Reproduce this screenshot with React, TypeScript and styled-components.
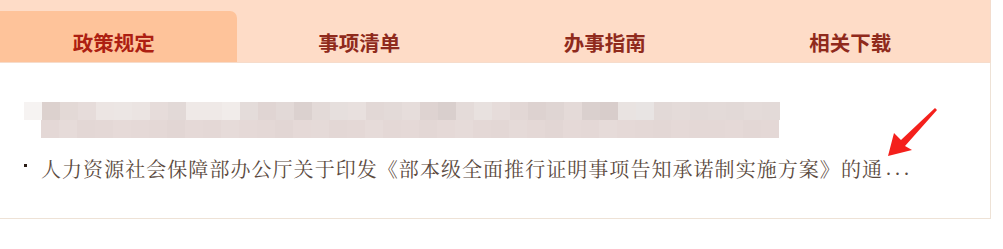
import React from "react";
import styled, { createGlobalStyle } from "styled-components";

const Global = createGlobalStyle`
  html, body { margin: 0; padding: 0; background: #fff; overflow: hidden; }
  body { font-family: "Noto Sans CJK SC", "Noto Sans", sans-serif; }
`;

const Page = styled.div`
  position: relative;
  width: 1000px;
  margin-left: -9px;
`;

const TabBar = styled.div`
  display: flex;
  align-items: flex-end;
  height: 62px;
  background: #fedcc7;
  border-right: 1px solid #f3dccd;
  box-sizing: border-box;
`;

const Tab = styled.div<{ $active?: boolean }>`
  width: 245.5px;
  height: 51px;
  box-sizing: border-box;
  padding-top: 21px;
  text-align: center;
  font-family: "Noto Sans CJK SC", sans-serif;
  font-weight: 700;
  font-size: 20.5px;
  line-height: 21px;
  color: ${(p) => (p.$active ? "#ad1f12" : "#8f2a1c")};
  background: ${(p) => (p.$active ? "#fec39a" : "transparent")};
  border-top-right-radius: ${(p) => (p.$active ? "7px" : "0")};
`;

const Panel = styled.div`
  height: 157px;
  box-sizing: border-box;
  border: 1px solid #eee2d6;
  border-top: 1px solid #f6dccb;
  padding: 39px 0 0 32px;
`;

const Mosaic = styled.div`
  display: flex;
  flex-direction: column;
`;

const MosaicRow = styled.div<{ $indent: number }>`
  display: flex;
  height: 18px;
  margin-left: ${(p) => p.$indent}px;
`;

const Cell = styled.div`
  width: 18px;
  height: 18px;
`;

const Item = styled.div`
  display: flex;
  align-items: center;
  margin-top: 19px;
  height: 22px;
`;

const Bullet = styled.span`
  width: 3px;
  height: 3px;
  background: #2b1d16;
  margin: -5px 14px 0 0;
  flex: none;
`;

const Title = styled.span`
  font-family: "Noto Serif CJK SC", "Noto Sans CJK SC", serif;
  font-weight: 400;
  font-size: 20px;
  letter-spacing: 1.05px;
  color: #5b4a40;
  white-space: nowrap;
`;

const Dots = styled.span`
  font-family: "Liberation Serif", serif;
  font-size: 20px;
  letter-spacing: 4px;
  color: #5b4a40;
  margin-left: 3px;
`;

const Arrow = styled.svg`
  position: absolute;
  left: 0;
  top: 0;
  pointer-events: none;
`;

const row1 = [
  "#f6f3f2", "#dcd1ce", "#e3d9d6", "#e6dcda", "#ece5e3", "#ece6e4", "#ebe4e2",
  "#e6dcda", "#e2d9d7", "#efe9e7", "#efe9e7", "#f1ecea", "#e4dcda", "#e0d5d3",
  "#e2d9d7", "#dbd1cf", "#e3dad8", "#e6dfdd", "#e8e0de", "#e2d8d6", "#e3dad8",
  "#e6dddb", "#ded3d1", "#d9cfcd", "#e4dbd9", "#e8e1df", "#e6dcda", "#e2d7d5",
  "#ddd2d0", "#dfd5d3", "#e4dad8", "#dad0ce", "#d8cdcb", "#e9e3e1", "#e8e4e3",
  "#e2d9d7", "#e4dbd9", "#e2d9d7", "#e3dad8", "#e2d9d7", "#e4dbd9", "#e3dad8",
];
const row2 = [
  "#e4d8d6", "#e6dbd9", "#e3d7d5", "#e4d8d6", "#e6dad8", "#e5d9d7", "#e4d8d6",
  "#e2d6d4", "#e5d9d7", "#e4d8d6", "#e6dbd9", "#e5d9d7", "#e4d8d6", "#e2d6d4",
  "#e5d9d7", "#e5dad8", "#e3d7d5", "#e4d8d6", "#e6dbd9", "#e4d8d6", "#e5d9d7",
  "#e3d7d5", "#e5d9d7", "#e6dbd9", "#e4d8d6", "#e3d7d5", "#e5dad8", "#e4d8d6",
  "#e2d6d4", "#e5d9d7", "#e4d8d6", "#e6dbd9", "#e5d9d7", "#e4d8d6", "#e3d7d5",
  "#e5d9d7", "#e4d8d6", "#e4d8d6", "#e5d9d7", "#e3d7d5", "#e4d8d6",
];

const tabs = ["政策规定", "事项清单", "办事指南", "相关下载"];

export default function App() {
  return (
    <Page>
      <Global />
      <TabBar>
        {tabs.map((t, i) => (
          <Tab key={t} $active={i === 0}>
            {t}
          </Tab>
        ))}
      </TabBar>
      <Panel>
        <Mosaic>
          <MosaicRow $indent={0}>
            {row1.map((c, i) => (
              <Cell key={i} style={{ background: c }} />
            ))}
          </MosaicRow>
          <MosaicRow $indent={17}>
            {row2.map((c, i) => (
              <Cell key={i} style={{ background: c }} />
            ))}
          </MosaicRow>
        </Mosaic>
        <Item>
          <Bullet />
          <Title>
            人力资源社会保障部办公厅关于印发《部本级全面推行证明事项告知承诺制实施方案》的通
          </Title>
          <Dots>...</Dots>
        </Item>
      </Panel>
      <Arrow width="1000" height="249" viewBox="0 0 1000 249">
        <polygon
          points="897,156 903,133 910,140 944,108 946,110 914,146 921,150"
          fill="#f4201c"
        />
      </Arrow>
    </Page>
  );
}
